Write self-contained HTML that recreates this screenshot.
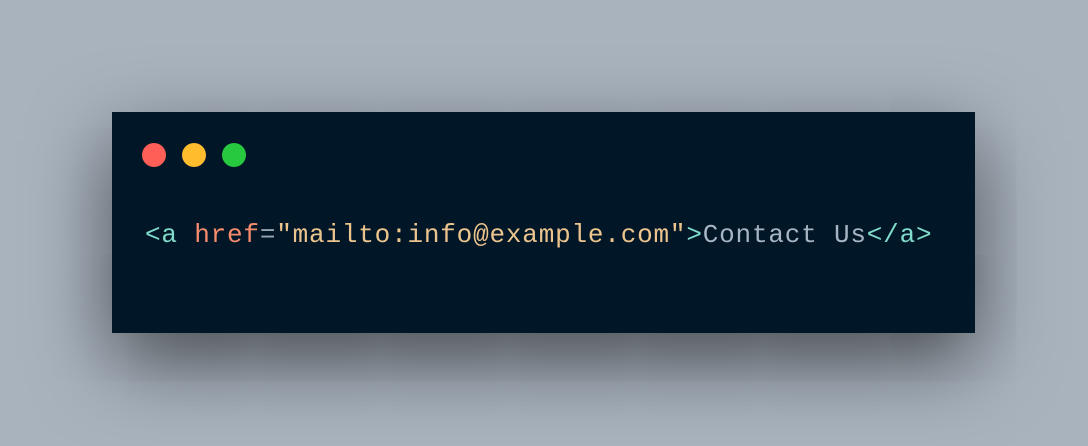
<!DOCTYPE html>
<html><head><style>
html,body{margin:0;padding:0}
body{width:1088px;height:446px;background:#a9b3be;position:relative;overflow:hidden}
.card{position:absolute;left:112px;top:112px;width:863px;height:221px;background:#011627;box-shadow:0 28px 80px rgba(0,0,0,0.6)}
.dot{position:absolute;top:143px;width:24px;height:24px;border-radius:50%}
.code{position:absolute;left:145px;top:216px;font-family:"Liberation Mono",monospace;font-size:26px;letter-spacing:0.8px;white-space:pre;line-height:38px}
.t{color:#7fdbca}.at{color:#f78c6c}.eq{color:#9aa5b4}.s{color:#ecc48d}.x{color:#a7b4c4}
</style></head><body>
<div class="card"></div>
<div class="dot" style="left:142px;background:#ff5f56"></div>
<div class="dot" style="left:182px;background:#ffbd2e"></div>
<div class="dot" style="left:222px;background:#27c93f"></div>
<div class="code"><span class="t">&lt;a</span> <span class="at">href</span><span class="eq">=</span><span class="s">"mailto:info@example.com"</span><span class="t">&gt;</span><span class="x">Contact Us</span><span class="t">&lt;/a&gt;</span></div>
</body></html>
